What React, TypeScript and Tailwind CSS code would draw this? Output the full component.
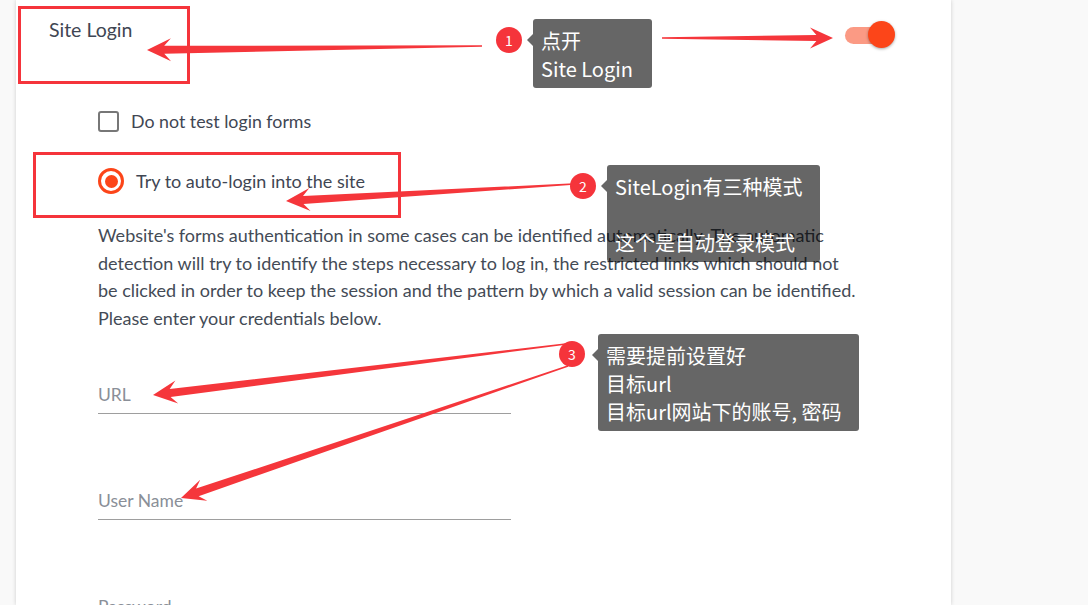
const cjk = { fontFamily: '"Noto Sans CJK SC", "Noto Sans", sans-serif' };

function arrowPoints(
  x1: number,
  y1: number,
  x2: number,
  y2: number,
  w0: number,
  w1: number,
  hl: number,
  hw: number
) {
  const dx = x2 - x1;
  const dy = y2 - y1;
  const len = Math.hypot(dx, dy);
  const ux = dx / len;
  const uy = dy / len;
  const nx = -uy;
  const ny = ux;
  const neck = [x2 - ux * hl * 0.72, y2 - uy * hl * 0.72];
  const base = [x2 - ux * hl, y2 - uy * hl];
  const pts = [
    [x1 + (nx * w0) / 2, y1 + (ny * w0) / 2],
    [neck[0] + (nx * w1) / 2, neck[1] + (ny * w1) / 2],
    [base[0] + (nx * hw) / 2, base[1] + (ny * hw) / 2],
    [x2, y2],
    [base[0] - (nx * hw) / 2, base[1] - (ny * hw) / 2],
    [neck[0] - (nx * w1) / 2, neck[1] - (ny * w1) / 2],
    [x1 - (nx * w0) / 2, y1 - (ny * w0) / 2],
  ];
  return pts.map((p) => p.map((v) => v.toFixed(1)).join(",")).join(" ");
}

const arrows = [
  [482, 46, 147, 50, 1.5, 8, 24, 23],
  [662, 38, 833, 38, 1.5, 6, 23, 21],
  [574, 184, 286, 201, 1.5, 8, 24, 23],
  [566, 344, 153, 395, 1.5, 8, 24, 23],
  [568, 366, 181, 498, 1.5, 8, 24, 22],
];

function Badge({ n, x, y }: { n: number; x: number; y: number }) {
  return (
    <div
      className="absolute flex h-[26px] w-[26px] items-center justify-center rounded-full bg-[#f5343b] text-[14px] text-white"
      style={{ left: x - 13, top: y - 13, ...cjk }}
    >
      {n}
    </div>
  );
}

function Tip({
  x,
  y,
  w,
  lines,
}: {
  x: number;
  y: number;
  w: number;
  lines: string[];
}) {
  return (
    <div
      className="absolute rounded-[3px] bg-black/60 px-[8px] pb-[5px] pt-[8px] text-[20px] leading-[28px] text-white"
      style={{ left: x, top: y, width: w, ...cjk }}
    >
      <div className="absolute left-[-6px] top-[15px] h-0 w-0 border-y-[6px] border-r-[6px] border-y-transparent border-r-black/60" />
      {lines.map((l, i) => (
        <div key={i} className="h-[28px] whitespace-nowrap">
          {l}
        </div>
      ))}
    </div>
  );
}

function Field({ label, className }: { label: string; className: string }) {
  return (
    <div className={`w-[413px] border-b border-[#9e9e9e] pb-[6px] ${className}`}>
      <div className="text-[17.5px] leading-[24px] text-[#8a8f98]">{label}</div>
    </div>
  );
}

export default function App() {
  return (
    <div
      className="relative h-[605px] w-[1088px] overflow-hidden bg-[#f9f9f9]"
      style={{ fontFamily: 'Lato, "Open Sans", sans-serif' }}
    >
      <div className="ml-4 h-full w-[935px] bg-white text-[#3f4653] shadow-[0_0_4px_rgba(0,0,0,0.18)]">
        <div className="flex h-[42px] items-start justify-between pl-[33px] pr-[56px] pt-[18px]">
          <h2 className="text-[19.5px] leading-[24px]">Site Login</h2>
          <div className="relative mt-[3px] h-[28px] w-[50px] shrink-0">
            <div className="absolute left-0 top-[6px] h-[17px] w-[40px] rounded-full bg-[#fb9a84]" />
            <div className="absolute right-0 top-0 h-[27px] w-[27px] rounded-full bg-[#fc4519] shadow-[0_1px_3px_rgba(0,0,0,0.35)]" />
          </div>
        </div>

        <div className="pl-[82px]">
          <label className="mt-[68px] flex h-[22px] items-center gap-[12px]">
            <span className="h-[21px] w-[21px] rounded-[3px] border-2 border-[#777]" />
            <span className="text-[17.8px]">Do not test login forms</span>
          </label>
          <label className="mt-[38px] flex h-[22px] items-center gap-[12px]">
            <span className="flex h-[26px] w-[26px] items-center justify-center rounded-full border-[3px] border-[#fc4519]">
              <span className="h-[13px] w-[13px] rounded-full bg-[#fc4519]" />
            </span>
            <span className="text-[18px]">Try to auto-login into the site</span>
          </label>

          <p className="mt-[30px] text-[18px] leading-[27.5px] text-[#444b56]">
            <span className="block whitespace-nowrap">
              Website's forms authentication in some cases can be identified automatically. The automatic
            </span>
            <span className="block whitespace-nowrap">
              detection will try to identify the steps necessary to log in, the restricted links which should not
            </span>
            <span className="block whitespace-nowrap">
              be clicked in order to keep the session and the pattern by which a valid session can be identified.
            </span>
            <span className="block whitespace-nowrap">Please enter your credentials below.</span>
          </p>

          <Field label="URL" className="mt-[51px]" />
          <Field label="User Name" className="mt-[75px]" />
          <Field label="Password" className="mt-[75px]" />
        </div>
      </div>

      {/* annotations */}
      <div className="absolute left-[18px] top-[6px] h-[78px] w-[172px] border-[3px] border-[#f5343b]" />
      <div className="absolute left-[33px] top-[152px] h-[66px] w-[368px] border-[3px] border-[#f5343b]" />

      <svg className="pointer-events-none absolute left-0 top-0" width="1088" height="605">
        {arrows.map((a, i) => (
          <polygon
            key={i}
            points={arrowPoints(a[0], a[1], a[2], a[3], a[4], a[5], a[6], a[7])}
            fill="#f5363b"
          />
        ))}
      </svg>

      <Badge n={1} x={509} y={40} />
      <Badge n={2} x={583} y={186} />
      <Badge n={3} x={572} y={354} />

      <Tip x={533} y={19} w={119} lines={["点开", "Site Login"]} />
      <Tip x={607} y={165} w={213} lines={["SiteLogin有三种模式", "", "这个是自动登录模式"]} />
      <Tip
        x={598}
        y={334}
        w={261}
        lines={["需要提前设置好", "目标url", "目标url网站下的账号, 密码"]}
      />
    </div>
  );
}
